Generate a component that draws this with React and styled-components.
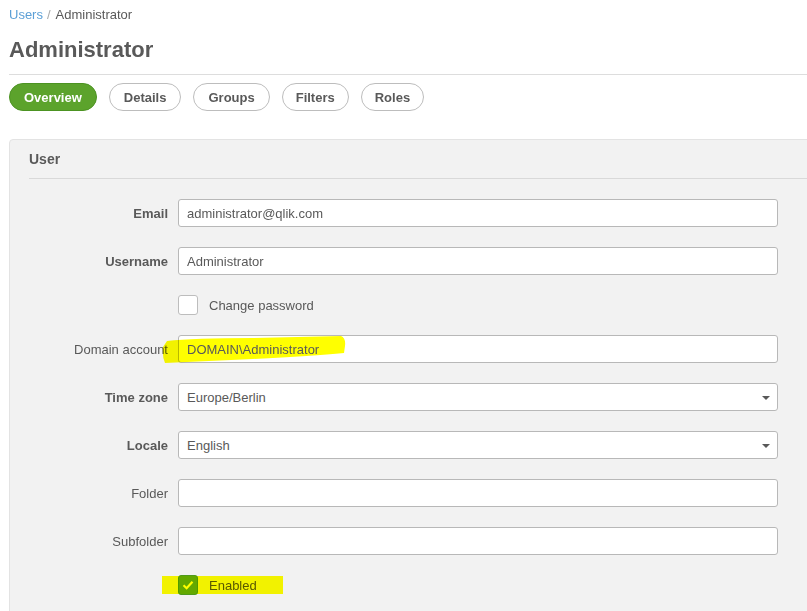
import React from 'react';
import styled, { createGlobalStyle } from 'styled-components';

const GlobalStyle = createGlobalStyle`
  html, body {
    margin: 0;
    padding: 0;
    background: #ffffff;
    overflow: hidden;
  }
  body {
    font-family: 'Liberation Sans', Arial, sans-serif;
    color: #595959;
  }
`;

const Page = styled.div`
  padding: 7px 0 0 9px;
  width: 798px;
`;

const Crumbs = styled.div`
  font-size: 13px;
  line-height: 16px;
  height: 16px;
`;

const CrumbLink = styled.a`
  color: #5b9fd6;
  text-decoration: none;
`;

const CrumbSep = styled.span`
  color: #aaaaaa;
  margin: 0 5px 0 4px;
`;

const Title = styled.h1`
  margin: 14px 0 0;
  font-size: 22px;
  line-height: 26px;
  font-weight: bold;
  color: #595959;
  padding-bottom: 11px;
  border-bottom: 1px solid #dddddd;
`;

const Tabs = styled.div`
  display: flex;
  gap: 12px;
  margin-top: 8px;
`;

const Tab = styled.button`
  height: 28px;
  padding: 0 ${p => p.$pad}px;
  border-radius: 14px;
  font-family: inherit;
  font-size: 13px;
  font-weight: bold;
  border: 1px solid ${p => (p.$active ? '#4c9322' : '#bdbdbd')};
  background: ${p => (p.$active ? '#5ca32c' : '#ffffff')};
  color: ${p => (p.$active ? '#ffffff' : '#595959')};
`;

const Panel = styled.section`
  margin-top: 28px;
  margin-right: -40px;
  background: #f2f2f2;
  border: 1px solid #e3e3e3;
  border-radius: 4px 0 0 0;
  padding-bottom: 30px;
`;

const PanelHead = styled.div`
  margin: 0 0 0 19px;
  height: 38px;
  line-height: 38px;
  font-size: 14px;
  font-weight: bold;
  color: #595959;
  border-bottom: 1px solid #d9d9d9;
`;

const Form = styled.div`
  display: grid;
  grid-template-columns: 158px 600px;
  column-gap: 10px;
  row-gap: 20px;
  align-items: center;
  padding-top: 20px;
`;

const Label = styled.label`
  text-align: right;
  font-size: 13px;
  font-weight: ${p => (p.$bold ? 'bold' : 'normal')};
  color: #595959;
`;

const Field = styled.div`
  position: relative;
  height: 28px;
  box-sizing: border-box;
  border: 1px solid #b8b8b8;
  border-radius: 3px;
  background: #ffffff;
  display: flex;
  align-items: center;
  padding: 0 8px;
  font-size: 13px;
  color: #595959;
`;

const FieldText = styled.span`
  position: relative;
`;

const Arrow = styled.span`
  position: absolute;
  right: 7px;
  top: 12px;
  width: 0;
  height: 0;
  border-left: 4px solid transparent;
  border-right: 4px solid transparent;
  border-top: 4px solid #595959;
`;

const CheckRow = styled.div`
  position: relative;
  grid-column: 2;
  display: flex;
  align-items: center;
  gap: 11px;
  height: 20px;
  font-size: 13px;
  color: #595959;
`;

const Box = styled.span`
  width: 20px;
  height: 20px;
  box-sizing: border-box;
  border-radius: 3px;
  border: 1px solid ${p => (p.$checked ? '#4f9a1c' : '#bdbdbd')};
  background: ${p => (p.$checked ? '#63a92a' : '#ffffff')};
  display: flex;
  align-items: center;
  justify-content: center;
`;

const Marker = styled.svg`
  position: absolute;
  pointer-events: none;
  overflow: visible;
  mix-blend-mode: multiply;
  left: ${p => p.$left}px;
  top: ${p => p.$top}px;
`;

const Highlight = ({ left, top, width, height, d }) => (
  <Marker $left={left} $top={top} width={width} height={height}>
    <path d={d} fill="#ffff00" />
  </Marker>
);

const inputs = [
  { label: 'Email', bold: true, value: 'administrator@qlik.com' },
  { label: 'Username', bold: true, value: 'Administrator' },
];

const lower = [
  { label: 'Time zone', bold: true, value: 'Europe/Berlin', select: true },
  { label: 'Locale', bold: true, value: 'English', select: true },
  { label: 'Folder', value: '' },
  { label: 'Subfolder', value: '' },
];

const tabs = [
  { name: 'Overview', pad: 14, active: true },
  { name: 'Details', pad: 14 },
  { name: 'Groups', pad: 14 },
  { name: 'Filters', pad: 13 },
  { name: 'Roles', pad: 13 },
];

const Row = ({ label, bold, value, select }) => (
  <>
    <Label $bold={bold}>{label}</Label>
    <Field>
      {value}
      {select && <Arrow />}
    </Field>
  </>
);

export default function App() {
  return (
    <Page>
      <GlobalStyle />
      <Crumbs>
        <CrumbLink href="#">Users</CrumbLink>
        <CrumbSep>/</CrumbSep>
        Administrator
      </Crumbs>
      <Title>Administrator</Title>
      <Tabs>
        {tabs.map(t => (
          <Tab key={t.name} $active={t.active} $pad={t.pad}>
            {t.name}
          </Tab>
        ))}
      </Tabs>
      <Panel>
        <PanelHead>User</PanelHead>
        <Form>
          {inputs.map(r => (
            <Row key={r.label} {...r} />
          ))}
          <CheckRow>
            <Box />
            Change password
          </CheckRow>
          <Label>Domain account</Label>
          <Field>
            <Highlight
              left={-16}
              top={0}
              width={182}
              height={27}
              d="M4 5 Q30 2 90 2 L178 0 Q183 2 182 10 L181 17 Q150 20 90 23 L2 27 Q-1 20 0 11 Z"
            />
            <FieldText>DOMAIN\Administrator</FieldText>
          </Field>
          {lower.map(r => (
            <Row key={r.label} {...r} />
          ))}
          <CheckRow>
            <Highlight
              left={-16}
              top={1}
              width={121}
              height={18}
              d="M0 0 H121 V18 H0 Z"
            />
            <Box $checked>
              <svg width="12" height="10" viewBox="0 0 12 10">
                <path d="M1.5 5.2 L4.6 8.2 L10.5 1.8" fill="none" stroke="#ffffff" strokeWidth="2.2" />
              </svg>
            </Box>
            Enabled
          </CheckRow>
        </Form>
      </Panel>
    </Page>
  );
}
